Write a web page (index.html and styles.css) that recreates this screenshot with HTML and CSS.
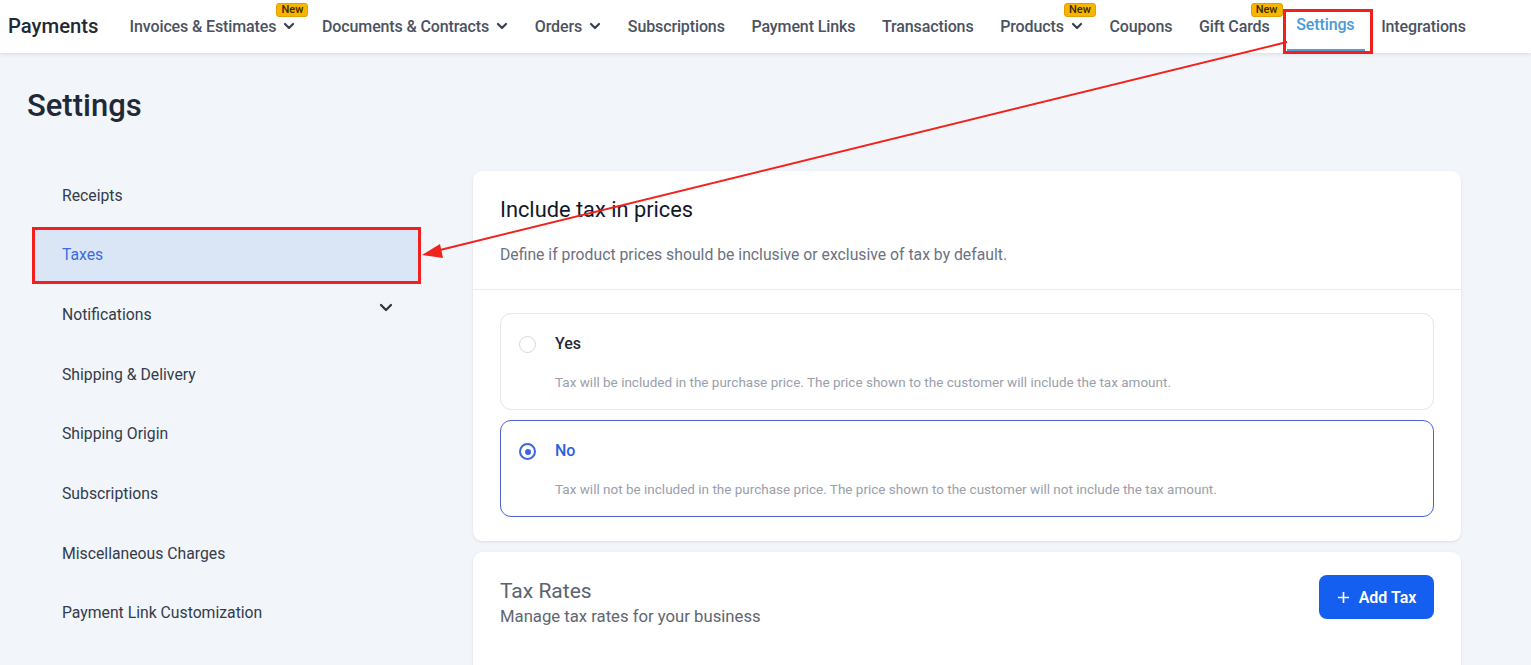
FILE: index.html
```html
<!DOCTYPE html>
<html>
<head>
<meta charset="utf-8">
<link rel="stylesheet" href="styles.css">
</head>
<body>
<header class="topbar">
  <div class="brand">Payments</div>
  <nav class="nav">
    <div class="nav-item">Invoices &amp; Estimates <svg class="chev" viewBox="0 0 12 8"><path d="M2 2l4 4 4-4" /></svg><span class="badge">New</span></div>
    <div class="nav-item">Documents &amp; Contracts <svg class="chev" viewBox="0 0 12 8"><path d="M2 2l4 4 4-4" /></svg></div>
    <div class="nav-item">Orders <svg class="chev" viewBox="0 0 12 8"><path d="M2 2l4 4 4-4" /></svg></div>
    <div class="nav-item">Subscriptions</div>
    <div class="nav-item">Payment Links</div>
    <div class="nav-item">Transactions</div>
    <div class="nav-item">Products <svg class="chev" viewBox="0 0 12 8"><path d="M2 2l4 4 4-4" /></svg><span class="badge">New</span></div>
    <div class="nav-item">Coupons</div>
    <div class="nav-item">Gift Cards<span class="badge">New</span></div>
    <div class="nav-item active">Settings<span class="redbox nav-redbox"></span></div>
    <div class="nav-item">Integrations</div>
  </nav>
</header>

<main class="page">
  <h1 class="page-title">Settings</h1>
  <div class="layout">
    <aside class="sidebar">
      <div class="side-item">Receipts</div>
      <div class="side-item selected">Taxes</div>
      <div class="side-item">Notifications <svg class="side-chev" viewBox="0 0 14 9"><path d="M2 2l5 5 5-5" /></svg></div>
      <div class="side-item">Shipping &amp; Delivery</div>
      <div class="side-item">Shipping Origin</div>
      <div class="side-item">Subscriptions</div>
      <div class="side-item">Miscellaneous Charges</div>
      <div class="side-item">Payment Link Customization</div>
    </aside>

    <section class="content">
      <div class="card">
        <div class="card-head">
          <h2 class="card-title">Include tax in prices</h2>
          <p class="card-desc">Define if product prices should be inclusive or exclusive of tax by default.</p>
        </div>
        <div class="options">
          <div class="option">
            <div class="option-row"><span class="radio"></span><span class="option-label">Yes</span></div>
            <p class="option-desc">Tax will be included in the purchase price. The price shown to the customer will include the tax amount.</p>
          </div>
          <div class="option checked">
            <div class="option-row"><span class="radio on"></span><span class="option-label">No</span></div>
            <p class="option-desc">Tax will not be included in the purchase price. The price shown to the customer will not include the tax amount.</p>
          </div>
        </div>
      </div>

      <div class="card card2">
        <div class="rates-head">
          <div>
            <h2 class="rates-title">Tax Rates</h2>
            <p class="rates-desc">Manage tax rates for your business</p>
          </div>
          <button class="add-btn"><svg class="plus" viewBox="0 0 14 14"><path d="M7 1v12M1 7h12" /></svg>Add Tax</button>
        </div>
        <div class="table-top"></div>
      </div>
    </section>
  </div>
</main>

<svg class="annot" viewBox="0 0 1531 665" width="1531" height="665">
  <line x1="1287" y1="42" x2="436" y2="251" stroke="#f0221c" stroke-width="2" />
  <polygon points="422,255 440,244 443,258" fill="#f0221c" />
</svg>
</body>
</html>
```

FILE: styles.css
```css
* { box-sizing: border-box; }
html, body { margin: 0; padding: 0; }
body {
  font-family: Roboto, "Noto Sans", Arial, sans-serif;
  background: #f2f5f9;
  width: 1531px;
  height: 665px;
  overflow: hidden;
  position: relative;
  color: #1f2937;
}

.topbar {
  height: 53px;
  background: #fff;
  display: flex;
  align-items: center;
  padding-left: 8px;
  padding-bottom: 1px;
  box-shadow: 0 1px 4px rgba(15, 23, 42, 0.12);
  position: relative;
  z-index: 2;
}
.brand {
  font-size: 20.3px;
  font-weight: 500;
  color: #1f2937;
  margin-right: 21px;
}
.nav { display: flex; align-items: center; gap: 6.7px; height: 100%; }
.nav-item {
  position: relative;
  height: 100%;
  display: flex;
  align-items: center;
  padding: 0 10px;
  font-size: 16px;
  font-weight: 500;
  letter-spacing: -0.12px;
  color: #4b5261;
  white-space: nowrap;
}
.chev {
  width: 12px; height: 8px; margin-left: 7px;
  fill: none; stroke: #374151; stroke-width: 2.2; stroke-linecap: round; stroke-linejoin: round;
}
.badge {
  position: absolute;
  right: -3px;
  top: 3px;
  height: 14px;
  padding: 0 4px;
  background: #f7b500;
  border: 1px solid #e0a100;
  border-radius: 3px;
  font-size: 11px;
  line-height: 12px;
  font-weight: 500;
  letter-spacing: 0;
  color: #3a2a00;
}
.nav-item.active {
  color: #4a9ad6;
  padding-bottom: 4px;
}
.nav-item.active::after {
  content: "";
  position: absolute;
  left: 1px; right: -1px; bottom: 1px;
  height: 2px;
  background: #5a9bd0;
}
.redbox { position: absolute; border: 3px solid #f21f1f; pointer-events: none; }
.nav-redbox { left: -3px; right: -9px; top: 9px; bottom: -2px; }

.page { padding: 0 0 0 27px; }
.page-title {
  margin: 0;
  padding-top: 34px;
  height: 112px;
  font-size: 31px;
  font-weight: 500;
  color: #1f2937;
  line-height: 38px;
}
.layout { display: flex; align-items: flex-start; gap: 55px; }
.sidebar { width: 391px; padding-left: 8px; display: flex; flex-direction: column; gap: 7.7px; padding-top: 4px; }
.side-item {
  position: relative;
  height: 52px;
  display: flex;
  align-items: center;
  padding-left: 27px;
  font-size: 15.75px;
  color: #333c4a;
}
.side-item.selected {
  background: #dae6f6;
  color: #3c6de0;
}
.side-item.selected::after {
  content: "";
  position: absolute;
  left: -3px; right: -3px; top: -2px; bottom: -3px;
  border: 3px solid #f21f1f;
}
.side-chev {
  position: absolute; right: 25px; top: 15px;
  width: 14px; height: 9px;
  fill: none; stroke: #2d3440; stroke-width: 2.2; stroke-linecap: round; stroke-linejoin: round;
}

.content { width: 988px; padding-top: 6px; display: flex; flex-direction: column; gap: 11px; }
.card {
  background: #fff;
  border-radius: 9px;
  box-shadow: 0 1px 3px rgba(15, 23, 42, 0.10);
}
.card-head { padding: 26px 27px 0; height: 119px; border-bottom: 1px solid #e9edf2; }
.card-title { margin: 0; font-size: 21.8px; font-weight: 400; line-height: 26px; color: #111827; }
.card-desc { margin: 20px 0 0; font-size: 15.75px; line-height: 24px; color: #6b7280; }
.options { padding: 23px 27px 24px; display: flex; flex-direction: column; gap: 10px; }
.option {
  border: 1px solid #e3e6ea;
  border-radius: 11px;
  height: 97px;
  padding: 17px 0 0 18px;
}
.option.checked { border-color: #4a63d8; }
.option-row { display: flex; align-items: center; height: 24px; }
.radio {
  width: 17px; height: 17px; border-radius: 50%;
  border: 1px solid #d4d7dc;
  margin-right: 19px;
  margin-top: 3px;
  display: flex; align-items: center; justify-content: center;
}
.radio.on { border: 2px solid #3c64e6; }
.radio.on::after { content: ""; width: 6px; height: 6px; border-radius: 50%; background: #3c64e6; }
.option-label { font-size: 16px; font-weight: 500; color: #1f2937; }
.option.checked .option-label { color: #2f5fe3; }
.option-desc { margin: 18px 0 0 36px; font-size: 13.5px; line-height: 18px; color: #9aa0ab; }

.card2 { height: 140px; padding: 23px 27px 0; }
.rates-head { display: flex; justify-content: space-between; align-items: flex-start; }
.rates-title { margin: 3px 0 0; font-size: 21px; font-weight: 400; line-height: 26px; color: #5a6370; }
.rates-desc { margin: 2px 0 0; font-size: 16.7px; line-height: 22px; color: #5f6672; }
.add-btn {
  height: 44px;
  width: 115px;
  border: none;
  border-radius: 8px;
  background: #145ef0;
  color: #fff;
  font-family: inherit;
  font-size: 16px;
  font-weight: 600;
  display: flex; align-items: center; justify-content: center; gap: 9px;
  padding: 0;
}
.plus { width: 13px; height: 13px; fill: none; stroke: #fff; stroke-width: 1.8; }
.table-top { margin-top: 40px; border-top: 1px solid #e6e9ee; }

.annot { position: absolute; left: 0; top: 0; z-index: 5; pointer-events: none; }
```
